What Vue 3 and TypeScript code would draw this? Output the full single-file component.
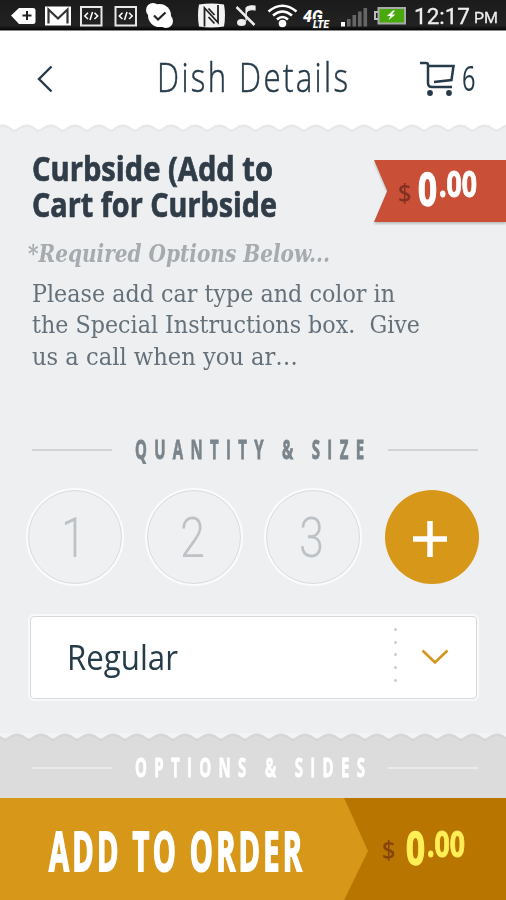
<script setup lang="ts">
import { ref } from 'vue'

interface Quantity {
  label: string
  width: number
}

interface Line {
  text: string
  width: number
}

const quantities: Quantity[] = [
  { label: '1', width: 25 },
  { label: '2', width: 25 },
  { label: '3', width: 25 },
]
const titleLines: Line[] = [
  { text: 'Curbside (Add to', width: 241 },
  { text: 'Cart for Curbside', width: 245 },
]
const descriptionLines: Line[] = [
  { text: 'Please add car type and color in', width: 363 },
  { text: 'the Special Instructions box.\u00a0 Give', width: 388 },
  { text: 'us a call when you ar…', width: 266 },
]
const size = ref('Regular')
const cartCount = ref(6)
const dots = [0, 1, 2, 3, 4]

// Condenses a line of text horizontally so that it spans the given width.
const vFit = {
  mounted(el: HTMLElement, binding: { value: number }) {
    const spacing = parseFloat(getComputedStyle(el).letterSpacing) || 0
    const natural = el.getBoundingClientRect().width
    const scale = binding.value / (natural - spacing)
    el.style.transform = `scaleX(${scale})`
    el.style.marginRight = `${binding.value - natural}px`
  },
}

function scallops(start: number, period: number): string {
  let d = `M${start} 6`
  for (let x = start; x < 530; x += period) {
    d += ` C${x + 3} 5.4 ${x + 6} 0.5 ${x + period / 2} 0.5 S${x + period - 3} 5.4 ${x + period} 5.4`
  }
  return `${d} V12 H${start} Z`
}
const headerEdge = scallops(-9.5, 24.1)
const optionsEdge = scallops(-19, 24)
</script>

<template>
  <div class="screen">
    <div class="status">
      <svg class="status-icons" width="410" height="30" viewBox="0 0 410 30">
        <path d="M11 15.500 L19 8 H33 Q35.500 8 35.500 10 V22 Q35.500 24 33 24 H19 Z" fill="#fff" />
        <path d="M22.500 15.500h9M27 11v9" stroke="#222" stroke-width="2" />
        <rect x="45" y="6.500" width="26" height="19" fill="#fff" />
        <path d="M48.500 23.500V9.500L58 18.500L67.500 9.500V23.500" fill="none" stroke="#333" stroke-width="2.200" />
        <g v-for="x in [80, 114.500]" :key="x" :transform="`translate(${x} 6)`">
          <rect x="1" y="1" width="20.500" height="18.500" fill="#222" stroke="#e8e8e8" stroke-width="2" />
          <path d="M8 6.800L4.800 10L8 13M14.500 6.800L17.700 10L14.500 13M12.500 6L10 14" fill="none" stroke="#fff" stroke-width="1.500" />
        </g>
        <circle cx="159.500" cy="15.500" r="11.500" fill="#fff" />
        <circle cx="153" cy="10" r="7" fill="#fff" />
        <circle cx="166" cy="21" r="7" fill="#fff" />
        <path d="M154 15.500l4 4l7.500-7" fill="none" stroke="#222" stroke-width="2.200" />
        <path d="M199 4.500Q211 2.500 224 4.500Q226 15 224 26.500Q211 28.500 199 26.500Q197 15 199 4.500Z" fill="#f3f3f3" />
        <path d="M204.500 26.500V8L218 22.500V5M208.500 8.500L214.500 15M208.500 17L214.500 23.500" fill="none" stroke="#222" stroke-width="1.800" />
        <path d="M236.500 7L254.500 25" stroke="#eee" stroke-width="2.500" />
        <path d="M246 21V8Q248 5 255 6V10Q248 9 247 12" fill="#eee" stroke="#eee" stroke-width="1.200" />
        <ellipse cx="241.500" cy="22.500" rx="4.500" ry="3.500" fill="#eee" />
        <path d="M268.500 11.500Q282.500 0 296.500 11.500M273 15.500Q282.500 7.500 292 15.500M277 19.500Q282.500 14.500 288 19.500" fill="none" stroke="#fff" stroke-width="2.600" />
        <circle cx="282.500" cy="23.500" r="3.800" fill="#fff" />
        <text x="303" y="22" class="network">4G</text>
        <text x="313" y="28" class="lte">LTE</text>
        <g fill="#666">
          <rect x="341" y="22" width="4" height="4.500" fill="#fff" />
          <rect x="347" y="19" width="3.600" height="7.500" />
          <rect x="352.500" y="15" width="3.600" height="11.500" />
          <rect x="358" y="11.500" width="3.600" height="15" />
          <rect x="363.500" y="8" width="3.600" height="18.500" />
        </g>
        <rect x="378.500" y="8" width="26.500" height="15.500" fill="#48a80c" stroke="#aaa" stroke-width="2" />
        <path d="M378 12h-3v7h3" fill="none" stroke="#bbb" stroke-width="2" />
        <path d="M393 10.500l-6 5.500h3.500l-2 4l7-5.500h-3.500l3-4z" fill="#fff" />
      </svg>
      <div class="clock"><span v-fit="56" class="fit">12:17</span></div>
      <div class="meridiem"><span v-fit="24" class="fit">PM</span></div>
    </div>

    <header class="header">
      <svg class="back" width="18" height="30" viewBox="0 0 18 30">
        <path d="M15.500 2.500L3 15L15.500 27.500" fill="none" stroke="#263b49" stroke-width="2.400" />
      </svg>
      <h1 class="page-title"><span v-fit="191" class="fit">Dish Details</span></h1>
      <div class="cart">
        <svg width="38" height="38" viewBox="0 0 38 38">
          <g fill="none" stroke="#263b49" stroke-width="2.500">
            <path d="M1 3H7Q9 3 9 5V23Q9 27 13 27H33" />
            <path d="M9 6H34.500L32.500 20L15 22" />
          </g>
          <circle cx="11" cy="33" r="2.900" fill="#263b49" />
          <circle cx="30" cy="33" r="2.900" fill="#263b49" />
        </svg>
        <div class="count"><span v-fit="13.500" class="fit">{{ cartCount }}</span></div>
      </div>
    </header>

    <main class="content">
      <svg class="edge" width="506" height="10" viewBox="0 0 506 10">
        <rect width="506" height="10" fill="#fff" />
        <path :d="headerEdge" fill="#e7e8ea" />
        <path :d="headerEdge" fill="#eeeff1" transform="translate(0 2.500)" />
      </svg>

      <section class="summary">
        <div class="text">
          <h2 class="dish">
            <span v-for="line in titleLines" :key="line.text" class="row">
              <span v-fit="line.width" class="fit">{{ line.text }}</span>
            </span>
          </h2>
          <p class="required"><span v-fit="302" class="fit">*Required Options Below...</span></p>
        </div>
        <div class="ribbon-wrap">
          <div class="ribbon price">
            <div class="currency"><span v-fit="13.500" class="fit">$</span></div>
            <div class="whole"><span v-fit="19" class="fit">0</span></div>
            <div class="cents"><span v-fit="38" class="fit">.00</span></div>
          </div>
        </div>
      </section>

      <p class="description">
        <span v-for="line in descriptionLines" :key="line.text" class="row">
          <span v-fit="line.width" class="fit">{{ line.text }}</span>
        </span>
      </p>

      <div class="divider">
        <i class="rule"></i>
        <h3 class="label"><span v-fit="229" class="fit">QUANTITY &amp; SIZE</span></h3>
        <i class="rule"></i>
      </div>

      <div class="quantities">
        <button v-for="q in quantities" :key="q.label" class="quantity">
          <span v-fit="q.width" class="fit">{{ q.label }}</span>
        </button>
        <button class="quantity more" aria-label="More">
          <svg width="36" height="38" viewBox="0 0 36 38">
            <path d="M1 19H35M18 1V37" stroke="#fff" stroke-width="5.500" />
          </svg>
        </button>
      </div>

      <div class="select">
        <div class="value"><span v-fit="111" class="fit">{{ size }}</span></div>
        <div class="dots"><i v-for="d in dots" :key="d"></i></div>
        <svg class="caret" width="28" height="16" viewBox="0 0 28 16">
          <path d="M1.500 1.500L14 13.500L26.500 1.500" fill="none" stroke="#d5951c" stroke-width="2.600" />
        </svg>
      </div>
    </main>

    <section class="options">
      <svg class="edge" width="506" height="10" viewBox="0 0 506 10">
        <rect width="506" height="10" fill="#f2f3f4" />
        <path :d="optionsEdge" fill="#d5d6d7" />
        <path :d="optionsEdge" fill="#dcdcdc" transform="translate(0 2.500)" />
      </svg>
      <div class="divider">
        <i class="rule"></i>
        <h3 class="label"><span v-fit="230" class="fit">OPTIONS &amp; SIDES</span></h3>
        <i class="rule"></i>
      </div>
    </section>

    <footer class="order">
      <div class="add"><span v-fit="253" class="fit">ADD TO ORDER</span></div>
      <div class="total price">
        <div class="currency"><span v-fit="13.500" class="fit">$</span></div>
        <div class="whole"><span v-fit="19" class="fit">0</span></div>
        <div class="cents"><span v-fit="38" class="fit">.00</span></div>
      </div>
    </footer>
  </div>
</template>

<style>
body {
  margin: 0;
  overflow: hidden;
}
</style>

<style scoped>
.screen {
  width: 506px;
  height: 900px;
  display: flex;
  flex-direction: column;
  overflow: hidden;
  background: #eeeff1;
  font-family: 'Open Sans', 'Noto Sans', sans-serif;
  color: #263b49;
}
h1, h2, h3, p { margin: 0; font-weight: inherit; font-size: inherit; }
svg { display: block; flex: none; }
.fit {
  display: inline-block;
  flex: none;
  white-space: nowrap;
  transform-origin: 0 50%;
}
.row { display: flex; }

.status {
  height: 30px;
  flex: none;
  display: flex;
  background: linear-gradient(#1b1b1b, #222 85%, #050505);
  color: #eee;
  font-family: Roboto, sans-serif;
}
.network { font: italic 900 16px Roboto, sans-serif; fill: #fff; }
.lte { font: italic 900 10px Roboto, sans-serif; fill: #fff; stroke: #222; stroke-width: 2px; paint-order: stroke; }
.clock { width: 60px; padding-left: 4px; font-size: 22px; line-height: 33px; -webkit-text-stroke: 0.3px; }
.meridiem { width: 28px; font-size: 15.500px; line-height: 37px; -webkit-text-stroke: 0.3px; }

.header {
  height: 94px;
  flex: none;
  display: flex;
  box-sizing: border-box;
  border-top: 1px solid #8a8a8a;
  background: #fff;
}
.back { margin: 33px 0 0 36px; }
.page-title {
  width: 264px;
  margin-left: 102.500px;
  font-size: 39.500px;
  font-weight: 300;
  letter-spacing: 3px;
  line-height: 60px;
  padding-top: 16px;
  -webkit-text-stroke: 0.5px;
}
.cart { display: flex; padding-top: 29px; margin-left: -1.500px; }
.count { margin-left: 4.500px; margin-top: -1px; font-size: 35px; line-height: 38px; }

.content { height: 608.500px; flex: none; }
.summary { display: flex; padding-top: 15.500px; height: 128px; }
.text { width: 344px; flex: none; }
.dish {
  padding-left: 32px;
  font-size: 34px;
  font-weight: 700;
  line-height: 36px;
  color: #303c47;
  -webkit-text-stroke: 0.7px;
}
.required {
  margin-top: 16px;
  padding-left: 28px;
  font: italic bold 24px/32px 'DejaVu Serif Condensed', 'DejaVu Serif', serif;
  color: #a5abaf;
}
.ribbon-wrap { margin: 10.500px 0 0 30px; width: 132px; filter: drop-shadow(0 2px 1px #0003); height: 62px; }
.ribbon {
  height: 62px;
  background: #c94f37;
  clip-path: polygon(0 0, 100% 0, 100% 100%, 0 100%, 10% 50%);
  color: #fff;
}
.price { display: flex; box-sizing: border-box; font-weight: 700; line-height: 1; }
.price > div { display: flex; flex: none; height: 50px; line-height: 1; }
.price .currency { width: 22px; font-size: 26px; font-weight: 600; color: #843021; }
.price .whole { width: 21px; font-size: 46px; -webkit-text-stroke: 1.400px; }
.price .cents { font-size: 36px; -webkit-text-stroke: 1px; }
.ribbon .currency { padding: 19px 0 0 23.500px; width: 20px; }
.ribbon .whole { padding-top: 4.500px; padding-left: 0.500px; }
.ribbon .cents { padding-top: 6px; }

.description {
  padding-left: 32px;
  height: 156px;
  box-sizing: border-box;
  font: 24.500px/31.800px 'DejaVu Serif Condensed', 'DejaVu Serif', serif;
  color: #65717a;
}

.divider { display: flex; align-items: center; height: 30px; padding-left: 32px; }
.rule { width: 80px; height: 2px; margin-top: 3px; background: #d1d4d6; }
.rule:last-child { width: 90px; }
.label {
  width: 253px;
  margin-left: 22.500px;
  font-size: 26.500px;
  font-weight: 700;
  line-height: 30px;
  letter-spacing: 13px;
  color: #7a848b;
  -webkit-text-stroke: 0.8px;
}

.quantities { display: flex; gap: 25px; padding: 26px 0 0 28px; height: 95px; }
.quantity {
  width: 94px;
  height: 94px;
  flex: none;
  display: flex;
  justify-content: center;
  box-sizing: border-box;
  padding: 0 3px 0 0;
  border: 1.500px solid #d9dbdd;
  border-radius: 50%;
  box-shadow: 0 0 0 2px #fafbfb;
  background: #eff0f2;
  font: 300 55px/94px Roboto, 'Open Sans', sans-serif;
  color: #bdc2c6;
}
.quantity.more { border: 0; box-shadow: none; background: #d79719; align-items: center; padding: 4px 4px 0 0; }

.select {
  display: flex;
  box-sizing: border-box;
  width: 447px;
  height: 83px;
  margin: 31px 0 0 30px;
  border: 1.500px solid #d7d9db;
  border-radius: 4px;
  box-shadow: 0 0 0 2px #f8f9f9;
  background: #fff;
}
.value { width: 327.500px; padding-left: 35.500px; box-sizing: content-box; font-size: 35px; line-height: 80px; }
.dots { display: flex; flex-direction: column; gap: 9.700px; padding-top: 11.500px; width: 26.500px; }
.dots i { width: 3px; height: 3px; background: #ccc; border-radius: 50%; }
.caret { margin-top: 32px; }

.options { flex: 1; background: #dcdcdc; }
.options .divider { padding-top: 9px; }
.options .label { color: #fff; }
.options .rule { background: #ebebeb; }

.order { height: 102px; flex: none; display: flex; background: #b87600; color: #fff; }
.add {
  width: 368px;
  padding-left: 49px;
  box-sizing: border-box;
  background: #d79719;
  clip-path: polygon(0 0, 93.500% 0, 100% 52%, 93.500% 100%, 0 100%);
  font-size: 53px;
  font-weight: 700;
  line-height: 105px;
  letter-spacing: 6px;
  -webkit-text-stroke: 2px;
}
.total { color: #ffee55; }
.total .currency { padding: 38px 0 0 13.500px; color: #884509; width: 24px; }
.total .whole { padding-top: 25.500px; }
.total .cents { padding-top: 27.500px; }
</style>
